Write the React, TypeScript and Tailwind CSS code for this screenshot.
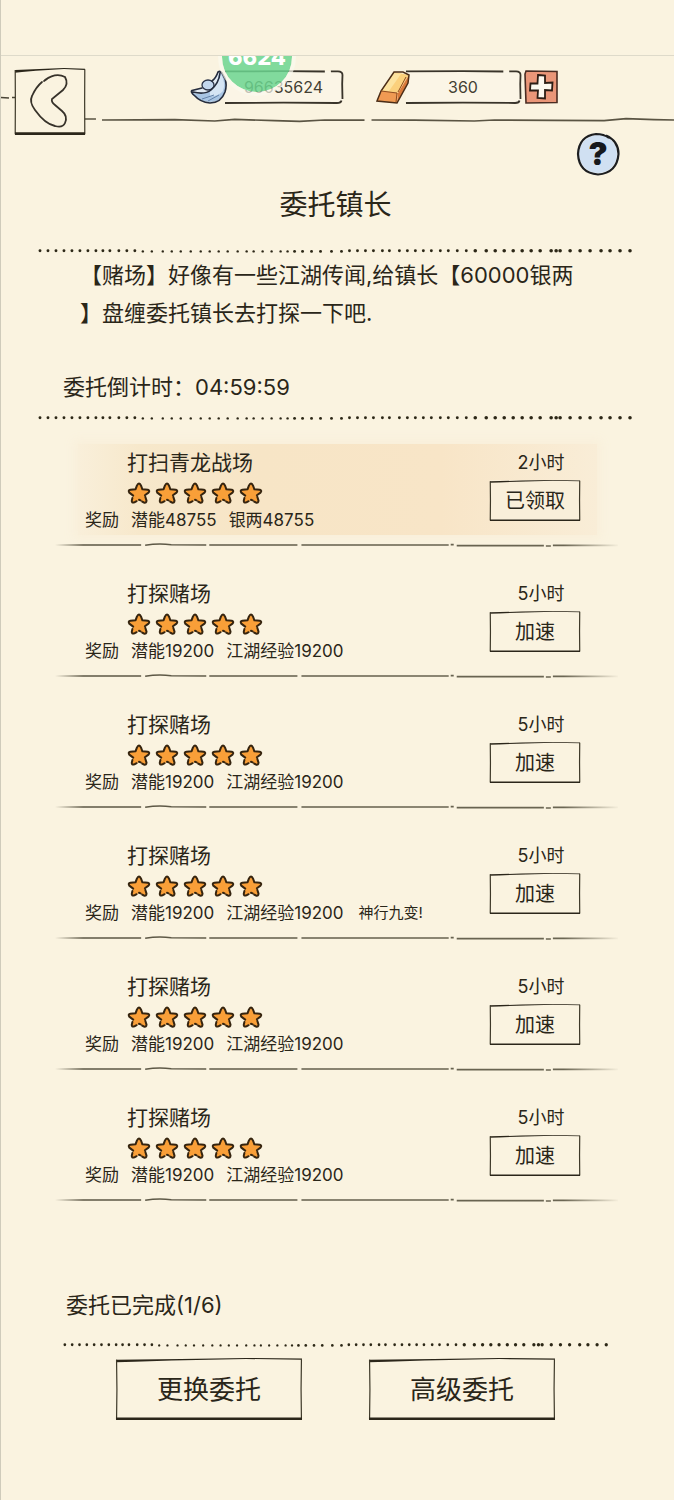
import clsx from "clsx";
import React from "react";

type Task = {
  id: number;
  title: string;
  hours: number;
  rewards: string[];
  bonus?: string;
  claimed?: boolean;
};

const TASKS: Task[] = [
  { id: 1, title: "打扫青龙战场", hours: 2, rewards: ["潜能48755", "银两48755"], claimed: true },
  { id: 2, title: "打探赌场", hours: 5, rewards: ["潜能19200", "江湖经验19200"] },
  { id: 3, title: "打探赌场", hours: 5, rewards: ["潜能19200", "江湖经验19200"] },
  { id: 4, title: "打探赌场", hours: 5, rewards: ["潜能19200", "江湖经验19200"], bonus: "神行九变!" },
  { id: 5, title: "打探赌场", hours: 5, rewards: ["潜能19200", "江湖经验19200"] },
  { id: 6, title: "打探赌场", hours: 5, rewards: ["潜能19200", "江湖经验19200"] },
];

// hand drawn dots, unevenly spaced
const DOTS = [
  2, 10, 18, 26, 34, 42, 50, 58, 65, 72, 81, 89, 97, 105, 114, 125, 134, 143,
  153, 163, 172, 181, 190, 200, 209, 216, 225, 234, 243, 250, 257, 265, 274,
  283, 294, 304, 312, 320, 328, 336, 345, 352, 362, 370, 378, 386, 394, 403,
  411, 420, 429, 438, 449, 458, 467, 476, 485, 494, 503, 514, 519, 523, 533,
  543, 553, 564, 573, 583, 593,
];

function DottedLine({ className }: { className?: string }) {
  return (
    <svg
      viewBox="0 0 596 6"
      preserveAspectRatio="none"
      className={clsx("block h-[6px]", className)}
      aria-hidden="true"
    >
      {DOTS.map((x, i) => (
        <circle
          key={x}
          cx={x}
          cy={i > 12 && i < 36 ? 3.4 : 2.8}
          r={i > 50 ? 1.8 : i > 12 && i < 30 ? 1.2 : 1.45}
          fill="#2c2716"
        />
      ))}
    </svg>
  );
}

function Divider() {
  return (
    <svg
      viewBox="0 0 564 4"
      preserveAspectRatio="none"
      className="mt-[11px] block h-1 w-full"
      aria-hidden="true"
    >
      <defs>
        <linearGradient id="ink" gradientUnits="userSpaceOnUse" x1="0" x2="564" y1="0" y2="0">
          <stop offset="0" stopColor="#5b5644" stopOpacity="0" />
          <stop offset="0.05" stopColor="#5b5644" />
          <stop offset="0.9" stopColor="#6b6653" />
          <stop offset="1" stopColor="#6b6653" stopOpacity="0" />
        </linearGradient>
      </defs>
      <path
        d="M0 2H86M90 2.2Q104 0 116 1.8L151 2M154 2H242M246 2H393M395 1.6H398M401 2.6H488M490 3H495M497 2.4H562"
        stroke="url(#ink)"
        strokeWidth="1.6"
        fill="none"
      />
    </svg>
  );
}

function SketchFrame({ heavy }: { heavy?: boolean }) {
  return (
    <svg
      viewBox="0 0 100 100"
      preserveAspectRatio="none"
      className="pointer-events-none absolute inset-0 size-full overflow-visible"
      aria-hidden="true"
    >
      <path d="M0 3L35 1.500 70 0 100 1V3L70 1.600 30 4 10 6 0 7Z" fill="#2b261a" />
      <path
        d="M.3 3L.5 50 .3 99M99.700 2L99.500 50 99.700 99"
        stroke="#3d3828"
        strokeWidth="1.200"
        vectorEffect="non-scaling-stroke"
        fill="none"
      />
      <path
        d="M0 98H100"
        stroke="#2b261a"
        strokeWidth={heavy ? 2.6 : 1.6}
        vectorEffect="non-scaling-stroke"
      />
    </svg>
  );
}

function PillFrame() {
  return (
    <svg
      viewBox="0 0 120 34"
      preserveAspectRatio="none"
      className="pointer-events-none absolute inset-0 size-full"
      aria-hidden="true"
    >
      <path d="M2 1H116Q119 2 119 5V30Q118 33 115 33H2Z" fill="#fbf5e6" />
      <path
        d="M2 1.400L60 1.200 101 1.500M107 1.400H114Q118.500 1.500 118.500 5L118.200 14 118.500 29M117.500 30.500Q117 33 113 33L60 32.600 2 33"
        stroke="#39342a"
        strokeWidth="1.8"
        fill="none"
      />
    </svg>
  );
}

function Stars() {
  return (
    <div className="mt-[3px] flex h-6 items-center gap-1 pl-[42px]" role="img" aria-label="5星">
      {[1, 2, 3, 4, 5].map((n) => (
        <svg key={n} viewBox="0 0 24 24" className="size-6">
          <path
            d="M12 2.200Q13.500 2.400 14.200 5L15.400 8.300 20.800 8.600Q23.400 9.600 21.600 11.600L17.800 14.400 19.400 19.600Q19.600 22 17.200 21.500L12 19 7.200 21.600Q4.600 22 4.800 19.600L6 14.600 2 11.600Q.8 9 3.400 8.600L8.600 8.200 9.900 4.600Q10.600 2.200 12 2.200Z"
            fill="#f99f38"
          />
          <path
            d="M6.200 14.600L2.300 11.600Q.8 9.200 3.400 8.700L8.600 8.200 9.900 4.600Q12 .2 14.200 5L15.400 8.300 20.800 8.700Q23.300 9.600 21.500 11.600L17.900 14.200M18.300 15.800L19.500 19.600Q19.400 22.200 17 21.500L15.200 20.600M13.600 19.400L12 18.800M9.600 20.200L7.400 21.400Q4.500 22.200 4.800 19.600L5.400 17"
            fill="none"
            stroke="#35240f"
            strokeWidth="2"
            strokeLinecap="round"
            strokeLinejoin="round"
          />
        </svg>
      ))}
    </div>
  );
}

function TaskRow({ task }: { task: Task }) {
  return (
    <li className="pt-7">
      <div
        className={clsx(
          "mx-[23px] flex justify-between pl-[7px] pr-[17px] pt-1",
          task.claimed &&
            "bg-[linear-gradient(90deg,#f9efda,#f7e8cb_12%,#f7e5c6_35%,#f8e5c7_70%,#f9edd7)] shadow-[0_0_10px_4px_#f9efda]"
        )}
      >
        <div className="pb-[3px]">
          <h2 className="pl-[42px] text-[21px] leading-[30px]">{task.title}</h2>
          <Stars />
          <p className="mt-[3px] flex gap-3 text-[17px] leading-6">
            <span>奖励</span>
            {task.rewards.map((r) => (
              <span key={r}>{r}</span>
            ))}
            {task.bonus && <span className="pl-[3px] text-[15px] leading-6">{task.bonus}</span>}
          </p>
        </div>
        <div className="flex w-[90px] flex-col">
          <span className="pl-3 text-center text-lg leading-[30px]">{task.hours}小时</span>
          <button
            className={clsx(
              "relative mt-[2px] h-[41px] text-xl",
              task.claimed && "bg-[#f9efda]"
            )}
          >
            <SketchFrame />
            {task.claimed ? "已领取" : "加速"}
          </button>
        </div>
      </div>
      <div className="-mt-[3px]">
        <Divider />
      </div>
    </li>
  );
}

function Header() {
  return (
    <header className="relative flex h-20 items-start pt-3">
      <svg viewBox="0 0 14 68" className="h-[68px] w-[14px]" aria-hidden="true">
        <path d="M0 29.500L8 30M11 29.500H14" stroke="#4a4536" strokeWidth="1.600" />
      </svg>
      <button aria-label="返回" className="relative h-[67px] w-[70px]">
        <SketchFrame heavy />
        <svg viewBox="0 0 70 67" className="size-full" aria-hidden="true">
          <path
            d="M30 12Q41 4 50 9Q54 16 48 22L37 31Q36 34 40 37L47 43Q53 48 50 55Q48 60 40 58Q30 56 20 42Q14 34 17 28Q21 19 27 14M29 13L32 11"
            fill="none"
            stroke="#37322a"
            strokeWidth="1.800"
            strokeLinecap="round"
          />
        </svg>
      </button>
      <div className="min-w-0 flex-1 pt-[2px]">
        <div className="flex h-[34px] items-center pl-[105px]">
          <svg viewBox="0 0 38 34" className="relative z-10 h-[34px] w-[38px]" aria-hidden="true">
            <path
              d="M1 22Q12 26 20 20Q27 13 29 2Q35 5 36 14Q36 27 27 31Q16 34 7 28Q3 26 1 22Z"
              fill="#a9c5e3"
            />
            <path d="M20 20Q28 14 31 4Q36 13 33 21Q28 27 20 26Z" fill="#d6e5f4" />
            <path d="M1 21L12 18 24 10 29 2Q28 14 20 20Q12 26 1 22Z" fill="#e3ebf3" />
            <ellipse cx="18" cy="15" rx="6" ry="5" fill="#c3d7ee" stroke="#2b3348" strokeWidth="1.300" />
            <path
              d="M12 18L2 20.500Q0 22 5 26Q10 32 20 33Q31 33 35 22Q38 12 33 5Q31 0 28 2Q26 8 22 11M3 22Q15 25 21 20Q29 13 30 3"
              fill="none"
              stroke="#252c3d"
              strokeWidth="1.600"
              strokeLinecap="round"
            />
            <path d="M12 29L24 25M18 31L29 25" stroke="#6684aa" strokeWidth="1" />
          </svg>
          <div className="relative -ml-[5px] flex h-[34px] w-[121px] items-center justify-center">
            <PillFrame />
            <span className="relative text-base text-[#443f33]">96635624</span>
          </div>
          <svg viewBox="0 0 34 34" className="relative z-10 ml-[32px] size-[34px]" aria-hidden="true">
            <path d="M18 2L33 5 22 23 5 21Z" fill="#fbd07c" />
            <path d="M18 3L25 4 13 21 6 20Z" fill="#fde3a0" />
            <path d="M33 5L32 13 21 33 22 23Z" fill="#d9793a" />
            <path d="M5 21L22 23 21 33 1 31Z" fill="#f09a53" />
            <path d="M18 2L27 2 33 5 32 13 21 33 1 31 5 21Z" fill="none" stroke="#4b2d17" strokeWidth="1.500" />
            <path d="M5 21L21 23 20 32M22 22L30 7" fill="none" stroke="#8f4c1f" strokeWidth="1" />
          </svg>
          <div className="relative -ml-[6px] flex h-[34px] w-[118px] items-center justify-center">
            <PillFrame />
            <span className="relative text-base text-[#443f33]">360</span>
          </div>
          <button aria-label="购买" className="ml-[2px] size-[34px]">
            <svg viewBox="0 0 34 34" className="size-full" aria-hidden="true">
              <path
                d="M2 1L33 1.500 33 32.500 2 33 1 4Z"
                fill="#ea9678"
                stroke="#4a2c22"
                strokeWidth="1.600"
              />
              <path
                d="M14 5L21 5.500V13L28.500 12.500 28 20.500 21 20V28.500L13.500 28 14 20.500 6 20.500 6.500 13.500 13.500 13.500Z"
                fill="#fdf8ee"
                stroke="#2d1d14"
                strokeWidth="1.800"
              />
            </svg>
          </button>
        </div>
        <svg
          viewBox="0 0 590 6"
          preserveAspectRatio="none"
          className="mt-[13px] block h-[6px] w-full"
          aria-hidden="true"
        >
          <path
            d="M0 2H11M17 3L90 2.600 130 4 150 2.400 190 3.600 215 4.400 240 3 280 3.200M287 3L330 3.200 390 4 410 3 470 3.400 520 3.600 542 1.600 570 2.600 590 3"
            fill="none"
            stroke="#5a5443"
            strokeWidth="1.700"
          />
        </svg>
      </div>
      {/* floating bubble, cut off by the status bar */}
      <div className="pointer-events-none absolute left-[217px] top-0 z-20 h-11 w-[78px] overflow-hidden">
        <div className="-mt-[38px] flex size-[78px] items-center justify-center rounded-full border-4 border-[#fbf9ee]/70 bg-[#6bd58f]/85 bg-clip-padding text-[22px] font-extrabold leading-none text-white">
          <span>6624</span>
        </div>
      </div>
    </header>
  );
}

export default function App() {
  return (
    <div className="min-h-screen border-l border-[#cfcbbb] bg-[#faf3e0] font-[Inter,'Noto_Sans_CJK_SC',sans-serif] text-[#2a2619]">
      <div className="h-14 border-b border-[#dedaca]" />
      <Header />
      <div className="-mt-1 flex justify-end pr-[54px]">
        <button
          aria-label="帮助"
          className="relative size-11 text-[32px] font-black leading-none text-[#16181c]"
        >
          <svg viewBox="0 0 44 44" className="absolute inset-0 size-full" aria-hidden="true">
            <circle cx="22" cy="22" r="20" fill="#d0e0f2" stroke="#f4f6f4" strokeWidth="2" />
            <path
              d="M30 3.500Q42.500 9 42.500 22Q41 41 22 42.500Q3 41 2 22Q3 4 20 2Q28 2 33 6"
              fill="none"
              stroke="#1d1e20"
              strokeWidth="2.200"
            />
          </svg>
          <span className="relative">?</span>
        </button>
      </div>

      <main>
        <h1 className="mt-[9px] pr-1 text-center text-[28px] leading-10">委托镇长</h1>
        <DottedLine className="mx-[37px] mt-[23px] w-[calc(100%-78px)]" />
        <p className="ml-[79px] mr-[90px] mt-[2px] text-[22px] leading-[38px] [line-break:anywhere]">
          【赌场】好像有一些江湖传闻,给镇长【60000银两】盘缠委托镇长去打探一下吧.
        </p>
        <p className="mt-9 pl-[62px] text-[22px] leading-[38px]">
          委托倒计时：<time>04:59:59</time>
        </p>
        <DottedLine className="mx-[37px] mt-[9px] w-[calc(100%-78px)]" />

        <ul className="-mt-[5px] px-[54px]">
          {TASKS.map((task) => (
            <TaskRow key={task.id} task={task} />
          ))}
        </ul>

        <p className="mt-[84px] pl-[65px] text-[22px] leading-[38px]">委托已完成(1/6)</p>
        <DottedLine className="ml-[62px] mr-[65px] mt-[18px] w-[calc(100%-127px)]" />
        <div className="mt-[10px] flex justify-center gap-[67px] pb-20 pr-1">
          <button className="relative h-[62px] w-[186px] text-[26px]">
            <SketchFrame heavy />
            更换委托
          </button>
          <button className="relative h-[62px] w-[186px] text-[26px]">
            <SketchFrame heavy />
            高级委托
          </button>
        </div>
      </main>
    </div>
  );
}
